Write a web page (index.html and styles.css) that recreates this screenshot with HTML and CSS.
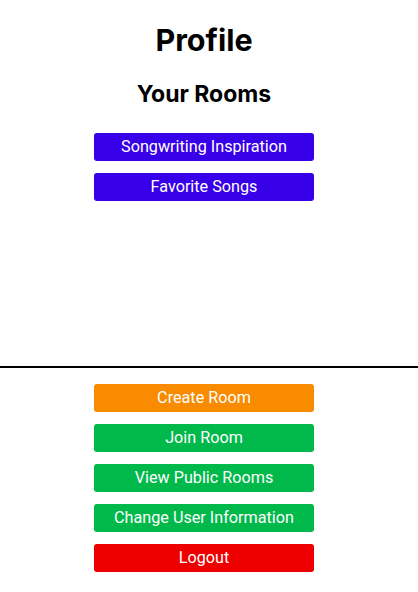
FILE: index.html
```html
<!DOCTYPE html>
<html>
<head>
<meta charset="utf-8">
<link rel="stylesheet" href="styles.css">
</head>
<body>
<div class="top">
  <h1 class="title">Profile</h1>
  <h2 class="subtitle">Your Rooms</h2>
  <div class="list">
    <button class="btn purple">Songwriting Inspiration</button>
    <button class="btn purple">Favorite Songs</button>
  </div>
</div>
<div class="bottom">
  <div class="list">
    <button class="btn orange">Create Room</button>
    <button class="btn green">Join Room</button>
    <button class="btn green">View Public Rooms</button>
    <button class="btn green">Change User Information</button>
    <button class="btn red">Logout</button>
  </div>
</div>
</body>
</html>
```
FILE: styles.css
```css
html, body {
  margin: 0;
  padding: 0;
  background: #fff;
}
body {
  font-family: Inter, "Liberation Sans", sans-serif;
  color: #000;
}
.top {
  height: 366px;
  display: flex;
  flex-direction: column;
  align-items: center;
  padding-right: 10px;
  border-bottom: 2px solid #000;
  box-sizing: border-box;
  height: 368px;
}
.title {
  margin: 22px 0 0;
  font-size: 30.5px;
  font-weight: 700;
  line-height: 36px;
}
.subtitle {
  margin: 22px 0 0;
  font-size: 23px;
  font-weight: 700;
  line-height: 28px;
}
.list {
  display: flex;
  flex-direction: column;
  gap: 12px;
  align-items: center;
}
.top .list {
  margin-top: 25px;
}
.bottom {
  padding-right: 10px;
}
.bottom .list {
  margin-top: 16px;
}
.btn {
  width: 220px;
  height: 28px;
  border: none;
  border-radius: 3px;
  color: #fff;
  font-family: Roboto, "Liberation Sans", sans-serif;
  font-size: 16.2px;
  padding: 0;
  line-height: 28px;
}
.purple { background: #3700e8; }
.orange { background: #f88b00; }
.green { background: #00b94a; }
.red { background: #ee0000; }
```
